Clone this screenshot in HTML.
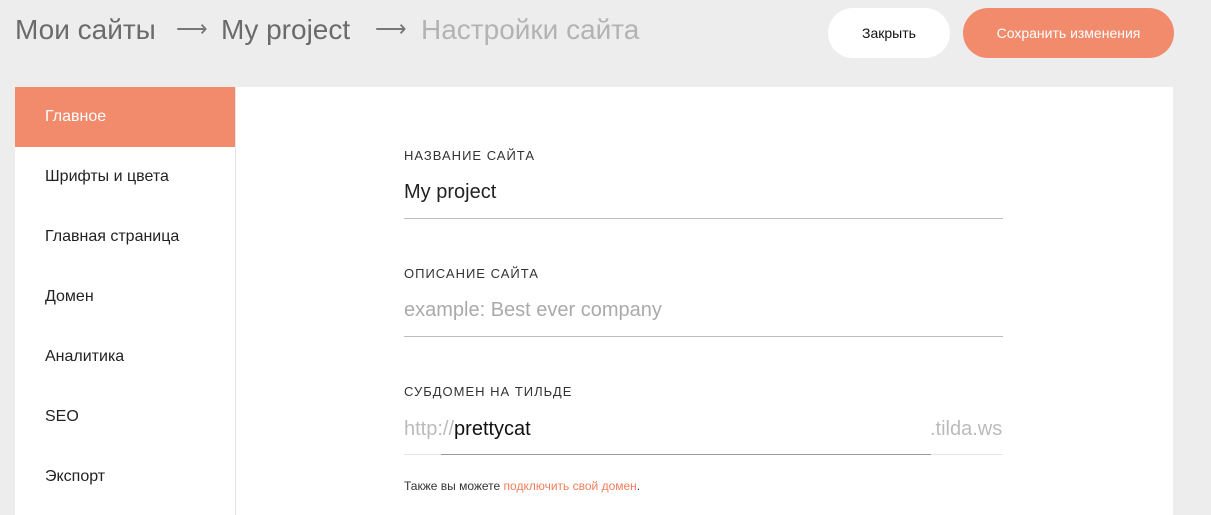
<!DOCTYPE html>
<html><head><meta charset="utf-8"><style>
*{margin:0;padding:0;box-sizing:border-box}
body{width:1211px;height:515px;background:#ededed;font-family:"Liberation Sans",sans-serif;position:relative;overflow:hidden}
.a{position:absolute;white-space:nowrap}
.crumb{top:14px;font-size:28px;color:#6b6b6b;font-weight:300}
.arr{top:16px;font-size:22px;color:#777}
.btn{position:absolute;top:8px;height:50px;border-radius:25px;font-size:14px;display:flex;align-items:center;justify-content:center}
.side{position:absolute;left:15px;top:87px;width:221px;height:428px;background:#fff;border-right:1px solid #e3e3e3}
.side div{height:60px;line-height:60px;padding-left:30px;font-size:16px;color:#222}
.side .on{background:#f28a6c;color:#fff}
.panel{position:absolute;left:236px;top:87px;width:937px;height:428px;background:#fff}
.lbl{font-size:13px;letter-spacing:1px;color:#333;left:404px}
.val{font-size:20px;left:404px}
.line{position:absolute;left:404px;width:599px;height:1px;background:#bdbdbd}
</style></head><body>
<div class="a crumb" style="left:15px">Мои сайты</div>
<div class="a crumb arr" style="left:176px">⟶</div>
<div class="a crumb" style="left:221px">My project</div>
<div class="a crumb arr" style="left:375px">⟶</div>
<div class="a crumb" style="left:421px;color:#b3b3b3">Настройки сайта</div>
<div class="btn" style="left:828px;width:122px;background:#fff;color:#111">Закрыть</div>
<div class="btn" style="left:963px;width:211px;background:#f28a6c;color:#fff">Сохранить изменения</div>
<div class="side"><div class="on">Главное</div><div>Шрифты и цвета</div><div>Главная страница</div><div>Домен</div><div>Аналитика</div><div>SEO</div><div>Экспорт</div></div>
<div class="panel"></div>
<div class="a lbl" style="top:148px">НАЗВАНИЕ САЙТА</div>
<div class="a val" style="top:181px;color:#222">My project</div>
<div class="line" style="top:218px"></div>
<div class="a lbl" style="top:266px">ОПИСАНИЕ САЙТА</div>
<div class="a val" style="top:299px;color:#aaa">example: Best ever company</div>
<div class="line" style="top:336px"></div>
<div class="a lbl" style="top:384px">СУБДОМЕН НА ТИЛЬДЕ</div>
<div class="a val" style="top:418px;color:#bbb">http://<span style="color:#111">prettycat</span></div>
<div class="a val" style="top:418px;left:930px;color:#bbb">.tilda.ws</div>
<div class="line" style="top:454px;background:#e6e6e6"></div>
<div class="line" style="top:454px;left:441px;width:490px;background:#999"></div>
<div class="a" style="top:479px;left:404px;font-size:12px;color:#333">Также вы можете <span style="color:#f07e5a">подключить свой домен</span>.</div>
</body></html>
